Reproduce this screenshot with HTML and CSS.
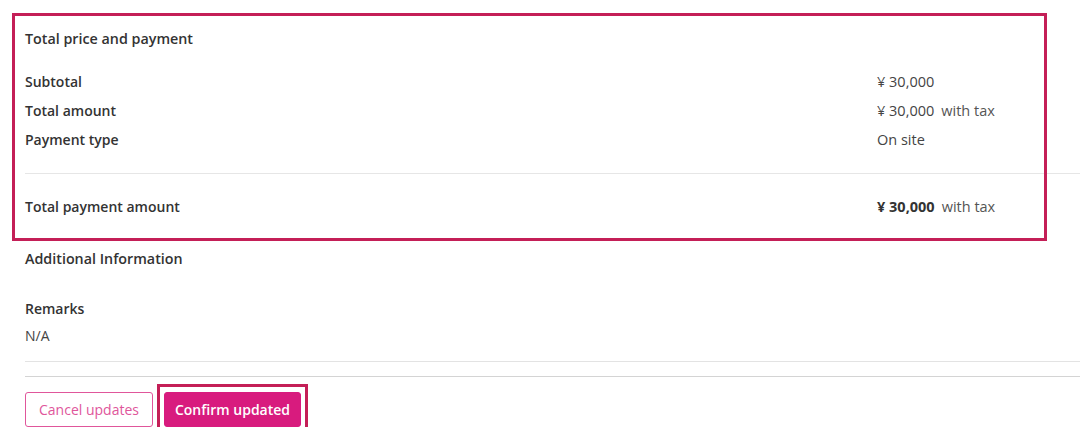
FILE: index.html
```html
<!DOCTYPE html>
<html>
<head>
<meta charset="utf-8">
<link rel="stylesheet" href="styles.css">
</head>
<body>
<div class="page">
  <section class="price">
    <h2 class="heading">Total price and payment</h2>
    <div class="rows">
      <div class="label">Subtotal</div>
      <div class="value">¥ 30,000</div>
      <div class="label">Total amount</div>
      <div class="value">¥ 30,000<span class="tax">with tax</span></div>
      <div class="label">Payment type</div>
      <div class="value">On site</div>
    </div>
    <hr class="divider">
    <div class="rows total">
      <div class="label">Total payment amount</div>
      <div class="value"><strong>¥ 30,000</strong><span class="tax">with tax</span></div>
    </div>
    <div class="annot annot-price"></div>
  </section>
  <section class="additional">
    <h2 class="heading">Additional Information</h2>
    <div class="remarks">
      <div class="label">Remarks</div>
      <div class="plain">N/A</div>
    </div>
  </section>
  <hr class="divider line1">
  <hr class="divider line2">
  <div class="actions">
    <button class="btn btn-outline">Cancel updates</button>
    <div class="confirm-wrap">
      <button class="btn btn-solid">Confirm updated</button>
      <div class="annot annot-btn"></div>
    </div>
  </div>
</div>
</body>
</html>
```
FILE: styles.css
```css
html, body {
  margin: 0;
  padding: 0;
  background: #fff;
}
body {
  font-family: "Open Sans", "Noto Sans", sans-serif;
  color: #333;
  font-size: 14px;
}
.page {
  padding-left: 25px;
  padding-top: 29px;
}
.price {
  position: relative;
}
.heading {
  margin: 0;
  font-size: 14.3px;
  font-weight: 600;
  line-height: 20px;
  color: #333;
}
.rows {
  display: grid;
  grid-template-columns: 852px 1fr;
  line-height: 29px;
  margin-top: 18px;
}
.label {
  font-weight: 600;
  color: #333;
}
.value {
  color: #444;
  font-size: 14.5px;
}
.value strong {
  font-weight: 700;
  color: #333;
}
.tax {
  margin-left: 7px;
  color: #555;
}
.divider {
  border: 0;
  border-top: 1px solid #e6e6e6;
  margin: 19px 0 0 0;
  height: 0;
}
.total {
  margin-top: 18px;
}
.additional {
  margin-top: 28px;
}
.remarks {
  margin-top: 30px;
  line-height: 20px;
}
.plain {
  margin-top: 7px;
  color: #444;
}
.line1 {
  margin-top: 15px;
  border-top-color: #e3e3e3;
}
.line2 {
  margin-top: 14px;
  border-top-color: #d4d4d4;
}
.actions {
  display: flex;
  align-items: center;
  gap: 11px;
  margin-top: 15px;
}
.btn {
  font-family: inherit;
  font-size: 14px;
  height: 35px;
  border-radius: 3px;
  cursor: pointer;
}
.btn-outline {
  padding: 0 13px;
  background: #fff;
  border: 1px solid #e0569b;
  color: #e0569b;
}
.btn-solid {
  padding: 0 10px;
  background: #d81b7e;
  border: 1px solid #d81b7e;
  color: #fff;
  font-weight: 600;
}
.confirm-wrap {
  position: relative;
}
.annot {
  position: absolute;
  border: 3px solid #c41f57;
  pointer-events: none;
}
.annot-price {
  left: -13px;
  top: -16px;
  width: 1029px;
  height: 222px;
}
.annot-btn {
  left: -7px;
  top: -8px;
  width: 145px;
  height: 47px;
}
```
